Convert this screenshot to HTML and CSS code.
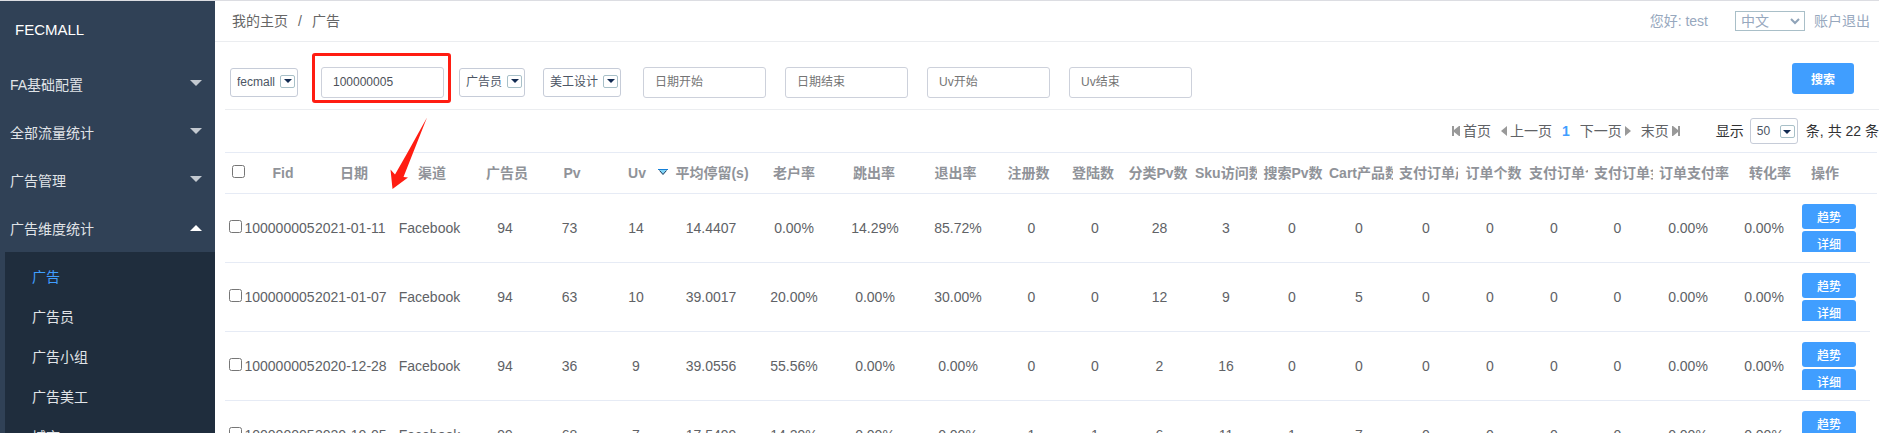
FILE: index.html
```html
<!DOCTYPE html>
<html lang="zh-CN">
<head>
<meta charset="utf-8">
<title>广告 - FECMALL</title>
<link rel="stylesheet" href="styles.css">
</head>
<body>
<div class="app">
  <aside class="sidebar">
    <div class="brand">FECMALL</div>
    <nav class="menu">
      <button class="menu-item" type="button">FA基础配置<span class="caret"></span></button>
      <button class="menu-item" type="button">全部流量统计<span class="caret"></span></button>
      <button class="menu-item" type="button">广告管理<span class="caret"></span></button>
      <button class="menu-item" type="button" aria-expanded="true">广告维度统计<span class="caret caret-up"></span></button>
      <div class="submenu">
        <a class="submenu-item active" href="#">广告</a>
        <a class="submenu-item" href="#">广告员</a>
        <a class="submenu-item" href="#">广告小组</a>
        <a class="submenu-item" href="#">广告美工</a>
        <a class="submenu-item" href="#">城市</a>
      </div>
    </nav>
  </aside>

  <main class="main">
    <header class="topbar">
      <nav class="crumbs"><a href="#">我的主页</a><span>/</span><a href="#">广告</a></nav>
      <div class="account">
        <span class="hello">您好: test</span>
        <span class="lang">
          <select class="lang-select" aria-label="语言"><option>中文</option></select>
          <svg class="lang-arrow" width="10" height="7" viewBox="0 0 10 7"><path d="M1 1l4 4 4-4" fill="none" stroke="#8fa3b8" stroke-width="2"/></svg>
        </span>
        <a href="#">账户退出</a>
      </div>
    </header>

    <form class="filters">
      <span class="pick pick-site"><select aria-label="站点"><option>fecmall</option></select><i class="pick-arrow"></i></span>
      <span class="marked">
        <input class="field" type="text" value="100000005" aria-label="Fid">
        <span class="mark-box"></span>
        <svg class="mark-arrow" width="40" height="74" viewBox="0 0 40 74"><path d="M38 1.500L14.500 61L19 61.500L3.500 73L1.500 53.500L6 58.500L18 37.500Z" fill="#ff1d12"/></svg>
      </span>
      <span class="pick pick-user"><select aria-label="广告员"><option>广告员</option></select><i class="pick-arrow"></i></span>
      <span class="pick pick-design"><select aria-label="美工设计"><option>美工设计</option></select><i class="pick-arrow"></i></span>
      <div class="ranges">
        <input class="field" type="text" placeholder="日期开始" aria-label="日期开始">
        <input class="field" type="text" placeholder="日期结束" aria-label="日期结束">
        <input class="field" type="text" placeholder="Uv开始" aria-label="Uv开始">
        <input class="field" type="text" placeholder="Uv结束" aria-label="Uv结束">
      </div>
      <button class="search" type="button">搜索</button>
    </form>

    <div class="pager">
      <nav class="pages">
        <a href="#"><svg width="8" height="10" viewBox="0 0 8 10"><path d="M0 0h2v4l5-4h1v10H7L2 6v4H0z"/></svg>首页</a>
        <a href="#"><svg width="6" height="10" viewBox="0 0 6 10"><path d="M6 0v10L0 5z"/></svg>上一页</a>
        <a class="current" href="#">1</a>
        <a href="#">下一页<svg width="6" height="10" viewBox="0 0 6 10"><path d="M0 0v10l6-5z"/></svg></a>
        <a href="#">末页<svg width="8" height="10" viewBox="0 0 8 10"><path d="M8 0H6v4L1 0H0v10h1l5-4v4h2z"/></svg></a>
      </nav>
      <div class="sizes">
        <label for="size">显示</label>
        <span class="pick pick-size"><select id="size"><option>50</option></select><i class="pick-arrow"></i></span>
        <span>条, 共 22 条</span>
      </div>
    </div>

    <div class="grid" id="grid"></div>
  </main>
</div>
<script src="grid.js"></script>
</body>
</html>
```
FILE: grid.js
```js
const columns = [
  // title, header width, body width
  ['', 24, 19], ['Fid', 74, 71], ['日期', 68, 70], ['渠道', 88, 89], ['广告员', 62, 62],
  ['Pv', 68, 67], ['Uv', 62, 66], ['平均停留(s)', 88, 84], ['老户率', 76, 82], ['跳出率', 84, 80],
  ['退出率', 79, 86], ['注册数', 67, 61], ['登陆数', 62, 66], ['分类Pv数', 68, 63], ['Sku访问数', 68, 70],
  ['搜索Pv数', 66, 62], ['Cart产品数', 70, 72], ['支付订单产品数', 65, 62], ['订单个数', 65, 66],
  ['支付订单个数', 65, 62], ['支付订单金额', 65, 65], ['订单支付率', 76, 76], ['转化率', 76, 76], ['操作', 66, 68]
];

const rows = [
  ['100000005', '2021-01-11', 'Facebook', '94', '73', '14', '14.4407', '0.00%', '14.29%', '85.72%', 0, 0, 28, 3, 0, 0, 0, 0, 0, 0, '0.00%', '0.00%'],
  ['100000005', '2021-01-07', 'Facebook', '94', '63', '10', '39.0017', '20.00%', '0.00%', '30.00%', 0, 0, 12, 9, 0, 5, 0, 0, 0, 0, '0.00%', '0.00%'],
  ['100000005', '2020-12-28', 'Facebook', '94', '36', '9', '39.0556', '55.56%', '0.00%', '0.00%', 0, 0, 2, 16, 0, 0, 0, 0, 0, 0, '0.00%', '0.00%'],
  ['100000005', '2020-10-05', 'Facebook', '99', '68', '7', '17.5499', '14.29%', '0.00%', '0.00%', 1, 1, 6, 11, 1, 7, 0, 0, 0, 0, '0.00%', '0.00%']
];

const cols = k => '<colgroup>' + columns.map(c => `<col style="width:${c[k]}px">`).join('') + '</colgroup>';
const box = label => `<input class="tick" type="checkbox" aria-label="${label}">`;
const sort = '<svg class="sort" width="10" height="7" viewBox="0 0 10 7"><path d="M1.500 1h7L5 5.500z" fill="#7fd4f7"/><path d="M1.500 1.500L5 5.500 8.500 1.500" fill="none" stroke="#12365c" stroke-width="1"/><path d="M0 .5h10" stroke="#1580d8"/></svg>';

const head = columns.map((c, i) =>
  `<th scope="col"><div class="title">${i ? c[0] : box('全选')}</div>${c[0] === 'Uv' ? sort : ''}</th>`).join('');
const body = rows.map(r =>
  `<tr><td class="tick-cell">${box('选择')}</td>${r.map(v => `<td>${v}</td>`).join('')}` +
  '<td><div class="actions"><button type="button">趋势</button><button type="button">详细</button></div></td></tr>').join('');

document.getElementById('grid').innerHTML =
  `<table class="head-table">${cols(1)}<thead><tr>${head}</tr></thead></table>` +
  `<div class="scroller"><table class="body-table">${cols(2)}<tbody>${body}</tbody></table></div>`;
```
FILE: styles.css
```css
* { box-sizing: border-box; }

body {
  margin: 0;
  background: #fff;
  color: #606266;
  font: 14px/20px "Liberation Sans", "Noto Sans CJK SC", sans-serif;
}

button, input, select { font-family: inherit; }
a { color: inherit; text-decoration: none; }

.app {
  display: flex;
  height: 100vh;
  overflow: hidden;
  border-top: 1px solid #dcdde2;
}

.sidebar {
  flex: 0 0 215px;
  background: #304156;
  color: #e0e4e8;
}

.brand {
  padding: 19px 15px 0;
  height: 59px;
  color: #fff;
  font-size: 15px;
}

.menu-item {
  display: flex;
  align-items: center;
  justify-content: space-between;
  width: 100%;
  height: 48px;
  padding: 0 13px 0 10px;
  border: 0;
  background: none;
  color: inherit;
  font-size: 14px;
  text-align: left;
}

.caret {
  border: 6px solid transparent;
  border-top-color: #c3c9d0;
  border-bottom: 0;
  margin-bottom: 2px;
}

.caret-up {
  border-top: 0;
  border-bottom: 6px solid #fff;
  margin-bottom: 0;
}

.submenu {
  margin-left: 5px;
  padding: 5px 0;
  background: #1f2d3d;
}

.submenu-item {
  display: block;
  padding: 10px 27px;
}

.submenu-item.active { color: #409eff; }

.main {
  flex: 1;
  min-width: 0;
}

.topbar {
  display: flex;
  align-items: center;
  justify-content: space-between;
  height: 41px;
  padding: 0 9px 0 17px;
  border-bottom: 1px solid #ebedf0;
}

.crumbs {
  display: flex;
  gap: 10px;
  color: #666;
}

.account {
  display: flex;
  align-items: center;
  gap: 9px;
  color: #97a8be;
}

.hello { margin-right: 18px; }

.lang { position: relative; display: flex; }

.lang-select {
  width: 70px;
  height: 20px;
  padding: 0 5px;
  appearance: none;
  border: 1px solid #a9bfc8;
  background: #fff;
  color: #97a8be;
  font-size: 14px;
  line-height: 18px;
}

.lang-arrow {
  position: absolute;
  right: 5px;
  top: 7px;
}

.filters {
  display: flex;
  align-items: center;
  height: 68px;
  margin-left: 10px;
  padding: 13px 25px 0 5px;
  border-bottom: 1px solid #ebedf0;
}

.pick { position: relative; display: flex; }

.pick select {
  width: 100%;
  height: 29px;
  padding: 0 6px;
  appearance: none;
  border: 1px solid #c6ccd8;
  border-radius: 3px;
  background: #fff;
  color: #4c5564;
  font-size: 12px;
}

.pick-site { width: 68px; }
.pick-user { width: 66px; }
.pick-design { width: 78px; margin-left: 18px; }
.pick-size { width: 48px; margin-right: 2px; }
.pick-size select { height: 26px; }

.pick-arrow {
  position: absolute;
  top: 7px;
  right: 3px;
  display: grid;
  place-items: center;
  width: 15px;
  height: 13px;
  border: 1px solid #a8c0c8;
  border-radius: 2px;
  pointer-events: none;
}

.pick-arrow::after {
  content: "";
  border: 4px solid transparent;
  border-top-color: #132b52;
  border-bottom: 0;
}

.field {
  width: 123px;
  height: 31px;
  padding: 0 11px;
  border: 1px solid #cdd1db;
  border-radius: 3px;
  color: #4c5058;
  font-size: 12px;
}

.field::placeholder { color: #757575; }

.marked {
  position: relative;
  display: flex;
  margin: 0 15px 0 23px;
}

.mark-box {
  position: absolute;
  inset: -14px -7px -5px -9px;
  border: 3px solid #ff1d12;
  border-radius: 3px;
  pointer-events: none;
}

.mark-arrow {
  position: absolute;
  left: 68px;
  top: 49px;
  pointer-events: none;
}

.ranges {
  display: flex;
  gap: 19px;
  margin-left: 22px;
}

.search {
  width: 62px;
  height: 31px;
  margin: 0 0 8px auto;
  border: 0;
  border-radius: 3px;
  background: #409eff;
  color: #fff;
  font-size: 12px;
  font-weight: 700;
}

.pager {
  display: flex;
  align-items: center;
  justify-content: flex-end;
  gap: 36px;
  height: 42px;
  white-space: nowrap;
}

.pages {
  display: flex;
  gap: 10px;
}

.pages a {
  display: flex;
  align-items: center;
  gap: 3px;
}

.pages svg { fill: #999; }

.pages .current {
  color: #409eff;
  font-weight: 700;
}

.sizes {
  display: flex;
  align-items: center;
  gap: 6px;
  color: #303133;
}

.grid { margin-left: 10px; }

table {
  width: 100%;
  table-layout: fixed;
  border-collapse: separate;
  border-spacing: 0;
}

.head-table {
  width: calc(100% - 2px);
  border-top: 1px solid #e6ebf5;
}

.scroller { padding-right: 9px; }

th {
  position: relative;
  height: 41px;
  padding: 0 6px 0 0;
  border-bottom: 1px solid #e6ebf5;
  color: #909399;
  font-weight: 700;
}

th:first-child { padding: 0 0 0 3px; }
th:last-child { text-align: left; }

.title {
  overflow: hidden;
  white-space: nowrap;
}

.sort {
  position: absolute;
  right: 3px;
  top: 16px;
}

td {
  height: 69px;
  padding: 0;
  border-bottom: 1px solid #e6ebf5;
  text-align: center;
  white-space: nowrap;
}

.tick {
  display: block;
  width: 13px;
  height: 13px;
  margin: 0 auto 4px;
}

.tick-cell { padding-left: 2px; }

.actions {
  display: flex;
  flex-direction: column;
  gap: 2px;
  width: 54px;
  height: 48px;
  overflow: hidden;
}

.actions button {
  flex: 0 0 25px;
  padding: 0;
  border: 0;
  border-radius: 3px;
  background: #409eff;
  color: #fff;
  font-size: 12px;
  font-weight: 500;
}
```
